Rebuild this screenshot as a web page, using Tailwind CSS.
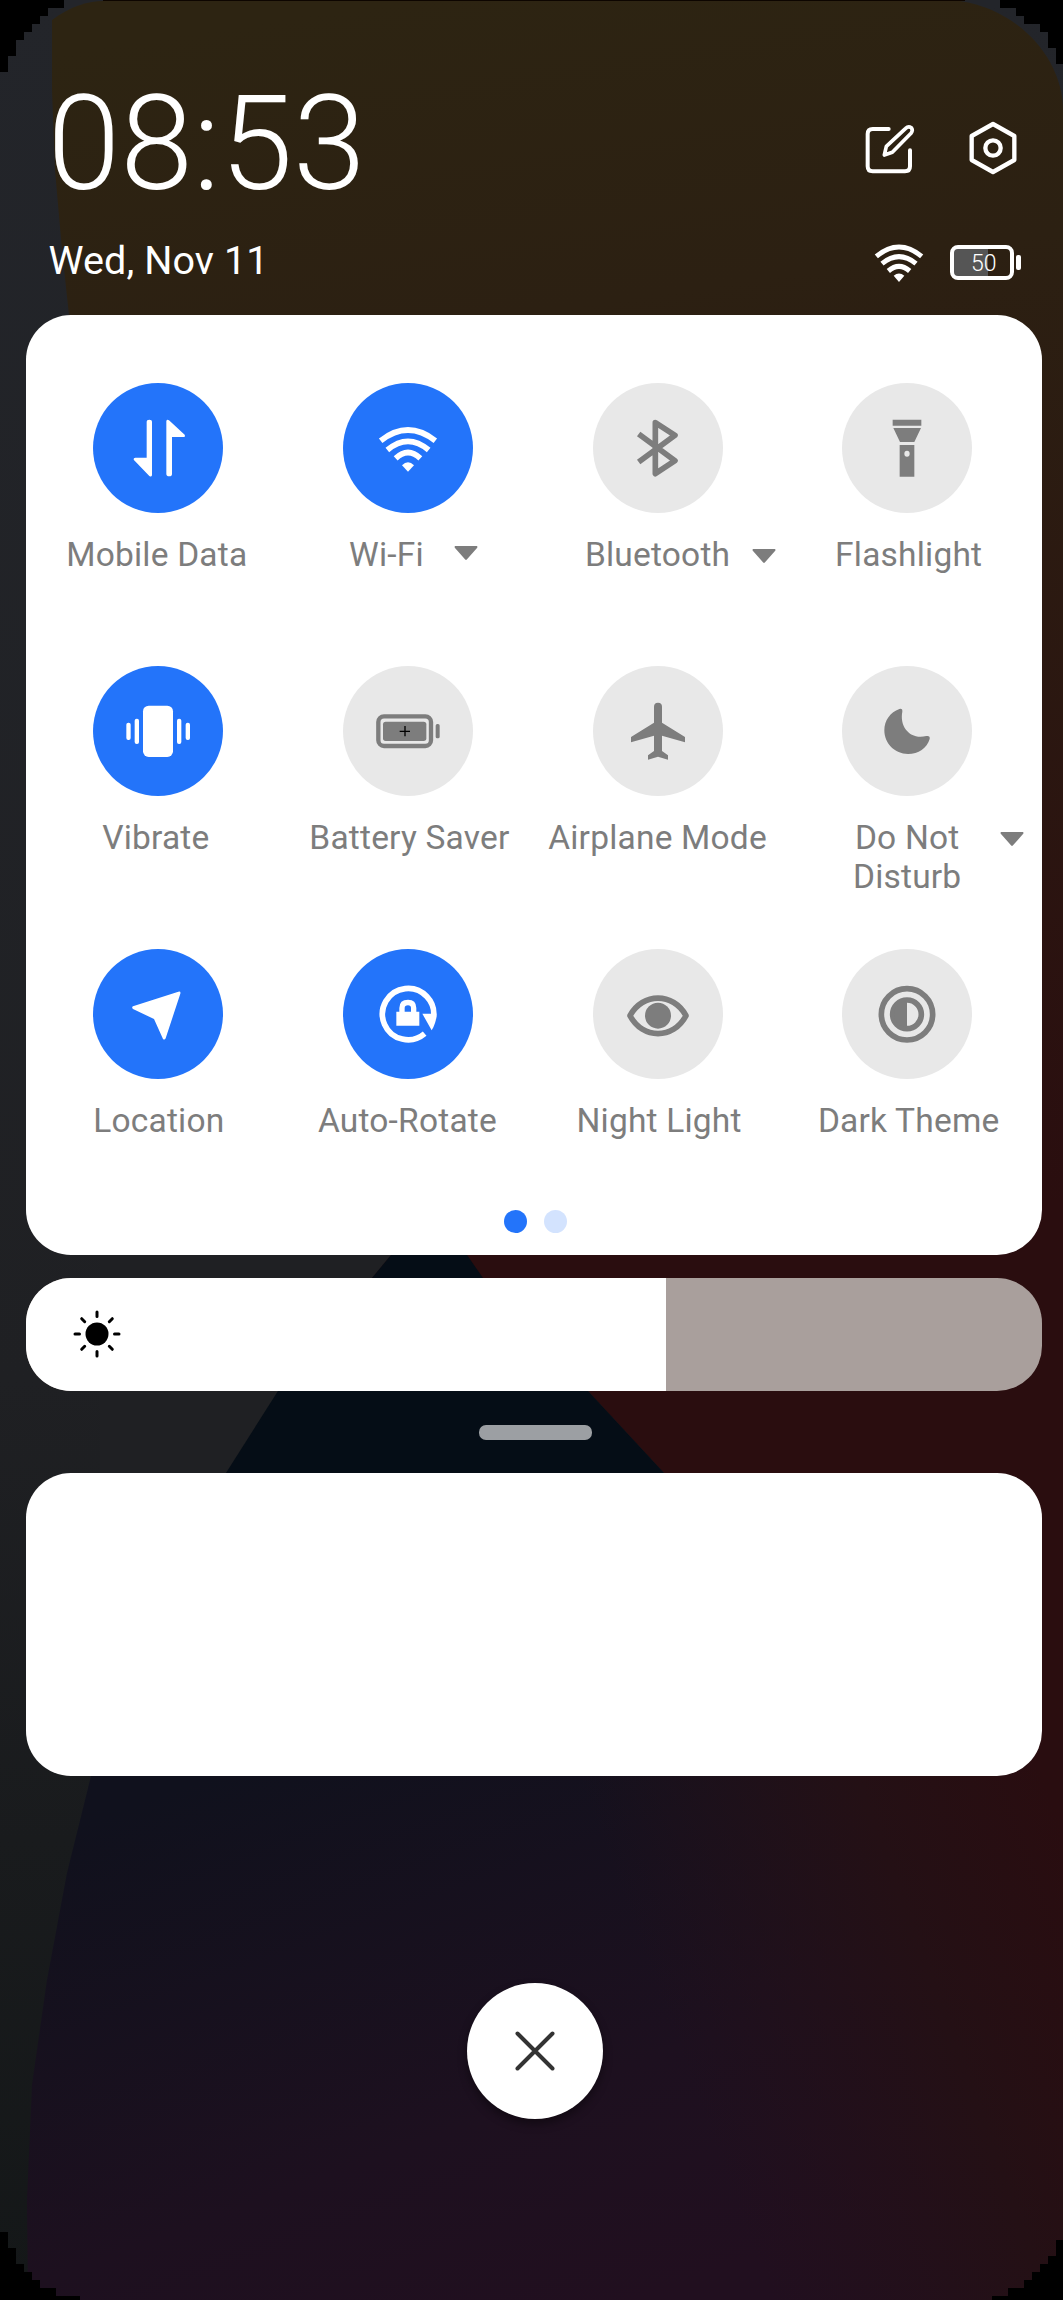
<!DOCTYPE html>
<html lang="en">
<head>
<meta charset="utf-8">
<title>Control Center</title>
<script src="https://cdn.jsdelivr.net/npm/@tailwindcss/browser@4"></script>
</head>
<body class="bg-black">
<div class="relative w-[1063px] h-[2300px] overflow-hidden bg-black font-[Roboto,sans-serif]">

  <!-- Wallpaper -->
  <svg class="absolute inset-0" width="1063" height="2300" viewBox="0 0 1063 2300">
    <defs>
      <linearGradient id="grey" x1="0" y1="0" x2="0" y2="1"><stop offset="0" stop-color="#23252a"/><stop offset=".6" stop-color="#1f2023"/><stop offset=".8" stop-color="#191b1d"/><stop offset="1" stop-color="#141718"/></linearGradient>
      <linearGradient id="brown" gradientUnits="userSpaceOnUse" x1="400" y1="0" x2="600" y2="1300"><stop offset="0" stop-color="#2d2412"/><stop offset=".25" stop-color="#2c2012"/><stop offset="1" stop-color="#2a0d0f"/></linearGradient>
      <linearGradient id="night" gradientUnits="userSpaceOnUse" x1="420" y1="1700" x2="640" y2="2300"><stop offset="0" stop-color="#10111d"/><stop offset=".65" stop-color="#1d101f"/><stop offset="1" stop-color="#210f1f"/></linearGradient>
      <linearGradient id="red" gradientUnits="userSpaceOnUse" x1="660" y1="2000" x2="1070" y2="1850"><stop offset="0" stop-color="#241018" stop-opacity="0"/><stop offset=".6" stop-color="#241015"/><stop offset="1" stop-color="#290d10"/></linearGradient>
    </defs>
    <rect width="1063" height="2300" fill="url(#grey)"/>
    <path d="M52 20C70 6 90 1 103 1H960C1020 10 1063 60 1063 110V1300H300L100 500L69 315L62 250L55 170L52 90Z" fill="url(#brown)"/>
    <path d="M103 0H965V1H103Z" fill="#0d0500"/>
    <path d="M440 1200L467 1255L483 1278L588 1391L664 1473L900 1800H1063V1200Z" fill="#2a0d0f"/>
    <path d="M100 1240H402L391 1255L372 1278L278 1391L226 1473L200 1520H100Z" fill="#1f2023"/>
    <path d="M402 1240H456L467 1255L483 1278L588 1391L664 1473L900 1800H120L226 1473L278 1391L372 1278L391 1255Z" fill="#050d16"/>
    <path d="M100 1740L91 1776L67 1873L47 1980L32 2085L27 2200L28 2300H1063V1740Z" fill="url(#night)"/>
    <path d="M100 1740L91 1776L67 1873L47 1980L32 2085L27 2200L28 2300H1063V1740Z" fill="url(#red)"/>
    <path d="M0 0H64V8H48V16H40V24H32V32H24V40H16V56H8V72H0Z"/>
    <path d="M1063 0H1000V8H1016V16H1024V24H1040V32H1048V48H1056V64H1063Z"/>
    <path d="M0 2232H8V2248H16V2264H24V2272H32V2280H40V2288H56V2296H80V2300H0Z"/>
    <path d="M1063 2240H1056V2256H1048V2264H1040V2272H1032V2280H1024V2288H1008V2296H992V2300H1063Z"/>
  </svg>

  <div class="relative flex h-full flex-col pl-[25.500px] pr-[21px]">
    <header class="flex h-[315px] shrink-0 justify-between pl-[22px] pr-[21px] text-white">
      <div class="flex flex-col pt-[67px]">
        <div class="h-[154px] text-[131px] leading-[154px] font-light">08:53</div>
        <div class="mt-[17px] pl-[1px] h-[46px] text-[39.500px] leading-[46px] tracking-[0.1px]">Wed, Nov 11</div>
      </div>
      <div class="flex flex-col items-end pt-[118px]">
        <div class="flex gap-[51px] pr-[4px]">
          <svg width="56" height="60" viewBox="60 84 168 180" fill="none" stroke="#fff" stroke-width="12" stroke-linecap="round" stroke-linejoin="round">
            <path d="M140 117H92Q77 117 77 132V229Q77 244 92 244H189Q204 244 204 229V181"/>
            <path d="M127 195L133 169L191 115Q199 107 208 113Q214 121 207 130L151 187Z" stroke-width="11"/>
          </svg>
          <svg width="48" height="60" viewBox="382 84 144 180" fill="none" stroke="#fff" stroke-width="13" stroke-linejoin="round">
            <path d="M454 102L518 138V210L454 246L390 210V138Z"/><circle cx="454" cy="174" r="23"/>
          </svg>
        </div>
        <div class="mt-[58px] flex items-center gap-[26px]">
          <svg width="50" height="52" viewBox="99 435 150 156" fill="none" stroke="#fff" stroke-width="15">
            <path d="M106 496Q174 440 242 496"/><path d="M123 518Q174 476 225 518"/><path d="M142 540Q174 512 206 540"/>
            <path d="M158 554Q174 541 190 554L174 573Z" fill="#fff" stroke="none"/>
          </svg>
          <div class="flex items-center gap-[2px]">
            <div class="relative h-[35px] w-[64px] overflow-hidden rounded-[8px] border-[4.5px] border-white bg-linear-to-r from-[#555] from-60% to-transparent to-60%">
              <span class="absolute left-[17px] top-[1px] text-[23px] leading-[27px] font-light">50</span>
            </div>
            <div class="h-[15px] w-[5px] rounded-[2px] bg-white"></div>
          </div>
        </div>
      </div>
    </header>

    <!-- Quick toggles -->
    <section class="flex h-[939.5px] shrink-0 flex-col rounded-[45px] bg-white pl-[8px] pr-[10px] pt-[68px]">
      <div class="grid h-[849px] grid-cols-4 grid-rows-3 text-[33.500px] leading-[39px] tracking-[0.2px] text-[#7d7d7d]">
        <div class="flex flex-col items-center">
          <svg class="rounded-full bg-[#2374fa]" width="130" height="130" viewBox="101 39 390 390" fill="#fff">
            <path d="M262 156Q262 149 270 149Q278 149 278 156V316Q276 322 270 318L223 269Q222 263 228 263H262Z"/>
            <path d="M338 312Q338 319 330 319Q321 319 321 312V153Q323 147 329 151L376 194Q379 201 372 201H338Z"/>
          </svg>
          <span class="mt-[22px] pr-[3px]">Mobile Data</span>
        </div>
        <div class="flex flex-col items-center">
          <svg class="rounded-full bg-[#2374fa]" width="130" height="130" viewBox="849 39 390 390" fill="none" stroke="#fff" stroke-width="17">
            <path d="M962 212Q1044 148 1126 212"/><path d="M982 240Q1044 188 1106 240"/><path d="M1007 265Q1044 230 1081 265"/>
            <path d="M1026 286Q1044 268 1062 286L1044 305Z" fill="#fff" stroke="none"/>
          </svg>
          <div class="mt-[22px] flex gap-[30px] pl-[11px]"><span>Wi-Fi</span>
            <svg class="mt-[11px]" width="24" height="15" viewBox="0 0 24 15" fill="#7d7d7d"><path d="M1 0H23Q24 1 23 2L12.8 13.6Q12 14.400 11.200 13.600L1 2Q0 1 1 0Z"/></svg>
          </div>
        </div>
        <div class="flex flex-col items-center">
          <svg class="rounded-full bg-[#e8e8e8]" width="130" height="130" viewBox="96 39 390 390" fill="none" stroke="#7d7d7d" stroke-width="17" stroke-linejoin="round">
            <path d="M233 192L342 272L283 311V158L342 196L233 276"/>
          </svg>
          <div class="mt-[22px] flex gap-[22px] pl-[46px]"><span>Bluetooth</span>
            <svg class="mt-[14px]" width="24" height="15" viewBox="0 0 24 15" fill="#7d7d7d"><path d="M1 0H23Q24 1 23 2L12.8 13.6Q12 14.400 11.200 13.600L1 2Q0 1 1 0Z"/></svg>
          </div>
        </div>
        <div class="flex flex-col items-center">
          <svg class="rounded-full bg-[#e8e8e8]" width="130" height="130" viewBox="844 39 390 390" fill="#7d7d7d">
            <path d="M996 149H1082V167H996ZM998 174H1081L1061 216H1018ZM1017 225H1061V320H1017Z"/><ellipse cx="1039" cy="251" rx="8" ry="9" fill="#e8e8e8"/>
          </svg>
          <span class="mt-[22px] pl-[3px]">Flashlight</span>
        </div>

        <div class="flex flex-col items-center">
          <svg class="rounded-full bg-[#2374fa]" width="130" height="130" viewBox="101 48 390 390" fill="#fff">
            <rect x="251" y="167" width="90" height="154" rx="17"/><rect x="201" y="218" width="13" height="52" rx="6"/><rect x="226" y="206" width="13" height="76" rx="6"/><rect x="353" y="206" width="13" height="76" rx="6"/><rect x="379" y="218" width="13" height="52" rx="6"/>
          </svg>
          <span class="mt-[22px] pr-[5px]">Vibrate</span>
        </div>
        <div class="flex flex-col items-center">
          <svg class="rounded-full bg-[#e8e8e8]" width="130" height="130" viewBox="849 48 390 390" fill="#7d7d7d">
            <rect x="955" y="199" width="158" height="89" rx="17" fill="none" stroke="#7d7d7d" stroke-width="13"/><rect x="969" y="215" width="130" height="58" rx="8"/><rect x="1127" y="222" width="12" height="43" rx="5"/>
            <path d="M1035 228V259M1019 244H1050" stroke="#000" stroke-width="4"/>
          </svg>
          <span class="mt-[22px] pl-[3px]">Battery Saver</span>
        </div>
        <div class="flex flex-col items-center">
          <svg class="rounded-full bg-[#e8e8e8]" width="130" height="130" viewBox="186 48 390 390" fill="#7d7d7d">
            <path d="M369 170Q369 158 381 158Q393 158 393 170V218L462 261V277L393 257V303L411 316V329L381 320L351 329V316L369 303V257L300 277V261L369 218Z"/>
          </svg>
          <span class="mt-[22px]">Airplane Mode</span>
        </div>
        <div class="relative flex flex-col items-center">
          <svg class="rounded-full bg-[#e8e8e8]" width="130" height="130" viewBox="934 48 390 390" fill="#7d7d7d">
            <path d="M1106 177Q1116 174 1115 185C1106 230 1138 270 1187 258Q1199 256 1197 267C1189 294 1163 312 1132 312C1092 312 1061 280 1061 241C1061 212 1079 186 1106 177Z"/>
          </svg>
          <span class="mt-[22px] text-center">Do Not<br>Disturb</span>
          <svg class="absolute right-[8px] top-[166px]" width="24" height="15" viewBox="0 0 24 15" fill="#7d7d7d"><path d="M1 0H23Q24 1 23 2L12.8 13.6Q12 14.400 11.200 13.600L1 2Q0 1 1 0Z"/></svg>
        </div>

        <div class="flex flex-col items-center">
          <svg class="rounded-full bg-[#2374fa]" width="130" height="130" viewBox="101 43 390 390" fill="#fff">
            <path d="M221 215L357 171Q365 169 363 177L319 311Q316 317 311 313L284 253L221 223Q216 218 221 215Z"/>
          </svg>
          <span class="mt-[22px] pl-[1px]">Location</span>
        </div>
        <div class="flex flex-col items-center">
          <svg class="rounded-full bg-[#2374fa]" width="130" height="130" viewBox="849 43 390 390" fill="#fff">
            <path d="M1120 252A77 77 0 1 0 1094 297" fill="none" stroke="#fff" stroke-width="17"/>
            <path d="M1087 237H1129Q1130 262 1115 287Z"/>
            <path d="M1009 231H1018V220Q1018 195 1044 195Q1069 195 1069 220V231H1078V273H1009ZM1034 231H1053V220Q1053 212 1044 212Q1034 212 1034 220Z" fill-rule="evenodd"/>
          </svg>
          <span class="mt-[22px] pr-[1px]">Auto-Rotate</span>
        </div>
        <div class="flex flex-col items-center">
          <svg class="rounded-full bg-[#e8e8e8]" width="130" height="130" viewBox="96 43 390 390" fill="#7d7d7d">
            <path d="M207 243C245 173 337 173 375 243C337 315 245 315 207 243Z" fill="none" stroke="#7d7d7d" stroke-width="17" stroke-linejoin="round"/><circle cx="291" cy="243" r="39"/>
          </svg>
          <span class="mt-[22px] pl-[3px]">Night Light</span>
        </div>
        <div class="flex flex-col items-center">
          <svg class="rounded-full bg-[#e8e8e8]" width="130" height="130" viewBox="844 43 390 390" fill="none" stroke="#7d7d7d" stroke-width="17">
            <circle cx="1039" cy="239" r="77"/><circle cx="1039" cy="239" r="43"/><path d="M1039 200A39 39 0 0 0 1039 278Z" fill="#7d7d7d" stroke="none"/>
          </svg>
          <span class="mt-[22px] pl-[3px]">Dark Theme</span>
        </div>
      </div>
      <div class="-mt-[22px] flex justify-center gap-[17px] pl-[6px]">
        <span class="size-[23px] rounded-full bg-[#2374fa]"></span>
        <span class="size-[23px] rounded-full bg-[#d3e3fe]"></span>
      </div>
    </section>

    <!-- Brightness -->
    <div class="mt-[23px] flex h-[113.500px] shrink-0 overflow-hidden rounded-[45px] bg-[#a99f9c]">
      <div class="flex w-[640px] items-center bg-white pl-[47px]">
        <svg width="48" height="48" viewBox="-24 -24 48 48" stroke="#000" stroke-width="3" stroke-linecap="round">
          <circle r="11.500" stroke="none"/>
          <path d="M0-17.500V-22M0 17.500V22M-17.500 0H-22M17.500 0H22M-12.300-12.300L-15.300-15.300M12.300-12.300L15.300-15.300M-12.300 12.300L-15.300 15.300M12.300 12.300L15.300 15.300"/>
        </svg>
      </div>
    </div>

    <div class="mt-[34px] ml-[453.500px] h-[14.500px] w-[113px] shrink-0 rounded-[7px] bg-[#9c9fa3]"></div>

    <section class="mt-[33.500px] h-[303px] shrink-0 rounded-[45px] bg-white"></section>

    <button class="mt-[207px] ml-[441.500px] flex size-[136px] shrink-0 items-center justify-center rounded-full bg-white shadow-[0_5px_10px_rgba(0,0,0,0.4)]">
      <svg width="42" height="42" viewBox="0 0 42 42" stroke="#333" stroke-width="4" stroke-linecap="round"><path d="M3.500 3.500L38.500 38.500M38.500 3.500L3.500 38.500"/></svg>
    </button>
  </div>
</div>
</body>
</html>
